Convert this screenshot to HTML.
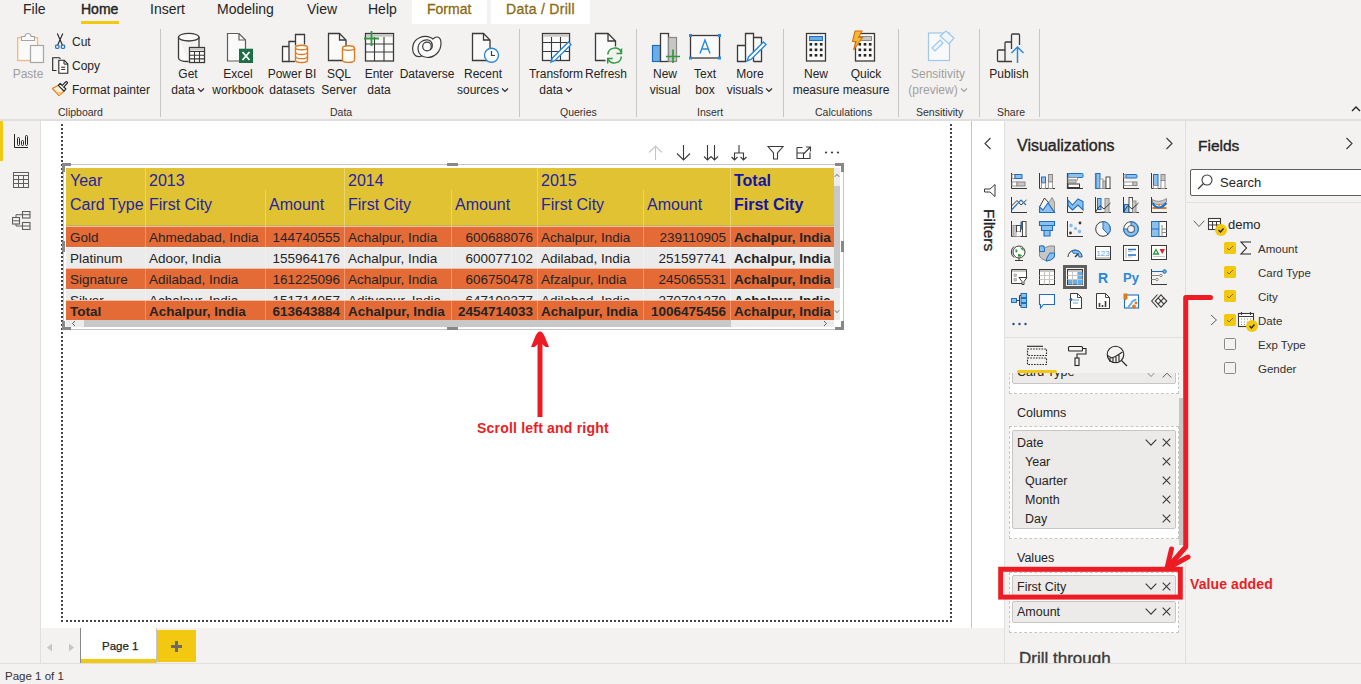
<!DOCTYPE html>
<html><head><meta charset="utf-8">
<style>
*{box-sizing:border-box;margin:0;padding:0}
html,body{width:1361px;height:684px;overflow:hidden;background:#f3f2f1;font-family:"Liberation Sans",sans-serif;color:#252423;position:relative}
.a{position:absolute}
.t{position:absolute;white-space:nowrap;line-height:1}
/* tabs */
.tab{position:absolute;top:1px;font-size:14px;color:#252423;line-height:16px}
/* ribbon */
.rb{position:absolute;text-align:center;font-size:12px;line-height:16px;color:#252423;white-space:nowrap}
.rb svg{display:block;margin:0 auto}
.rb svg.chev{display:inline-block;margin:0 0 1px 2px;vertical-align:middle}
.glbl{position:absolute;top:106px;font-size:10.5px;color:#323130;white-space:nowrap;line-height:12px}
.sep{position:absolute;top:29px;width:1px;height:88px;background:#c8c6c4}
/* table */
.tbl{position:absolute;left:66px;top:168px;width:769px;height:152px;overflow:hidden;background:#fff}
.hd{position:absolute;left:0;top:0;width:769px;height:58px;background:#e0c232}
.row{position:absolute;left:0;width:769px;height:21px;box-shadow:inset 0 1px 0 rgba(255,255,255,.55)}
.or{background:#e46b36}
.gr{background:#ebebeb}
.c{position:absolute;top:1px;white-space:nowrap;font-size:13.5px;line-height:21px;color:#252423}
.h{position:absolute;white-space:nowrap;font-size:16px;line-height:20px;color:#2424a4}
.vl{position:absolute;width:1px;background:rgba(255,255,255,.3)}
</style></head>
<body>

<!-- ===== Tabs row ===== -->
<div class="a" style="left:412px;top:0;width:75px;height:24px;background:#fff"></div>
<div class="a" style="left:491px;top:0;width:99px;height:24px;background:#fff"></div>
<div class="tab" style="left:23px">File</div>
<div class="tab" style="left:81px;font-size:14px;-webkit-text-stroke:0.4px #252423">Home</div>
<div class="a" style="left:81px;top:21px;width:38px;height:3px;background:#f2c811"></div>
<div class="tab" style="left:150px">Insert</div>
<div class="tab" style="left:217px">Modeling</div>
<div class="tab" style="left:307px">View</div>
<div class="tab" style="left:368px">Help</div>
<div class="tab" style="left:427px;color:#8a6a10;font-size:14px;-webkit-text-stroke:0.3px #8a6a10">Format</div>
<div class="tab" style="left:506px;color:#8a6a10;font-size:14px;letter-spacing:0.3px;-webkit-text-stroke:0.3px #8a6a10">Data / Drill</div>


<!-- ===== Ribbon ===== -->
<!-- Paste -->
<svg class="a" style="left:14px;top:32px" width="32" height="32" viewBox="0 0 32 32">
 <rect x="3.6" y="5.6" width="20" height="23" fill="#fbf3d6" stroke="#f2b58e" stroke-width="1.2"/>
 <rect x="5.5" y="7.5" width="16.5" height="19.5" fill="#fafafa"/>
 <path d="M7.5 8.5V4.5h3.5a3 3 0 0 1 6 0h3.5v4z" fill="#fafafa" stroke="#a8a6a4" stroke-width="1.1"/>
 <rect x="16.5" y="13.5" width="13" height="17" fill="#fafafa" stroke="#a8a6a4" stroke-width="1.2"/>
</svg>
<div class="rb" style="left:9px;top:66px;width:38px;color:#a19f9d">Paste</div>
<!-- Cut -->
<svg class="a" style="left:52px;top:33px" width="16" height="16" viewBox="0 0 16 16">
 <path d="M5.3 0.5L10.5 12.2M10.8 0.5L5.6 12.2" stroke="#252423" stroke-width="1.1" fill="none"/>
 <rect x="3.6" y="12.2" width="3.3" height="3.1" rx="0.8" fill="none" stroke="#2b79c2" stroke-width="1.3"/>
 <rect x="9.3" y="12.2" width="3.3" height="3.1" rx="0.8" fill="none" stroke="#2b79c2" stroke-width="1.3"/>
</svg>
<div class="rb" style="left:72px;top:34px;text-align:left">Cut</div>
<!-- Copy -->
<svg class="a" style="left:52px;top:57px" width="17" height="17" viewBox="0 0 17 17">
 <path d="M4.5 13.5H0.7V0.7H7.3L8.5 1.9" fill="none" stroke="#252423" stroke-width="1.1"/>
 <path d="M6.8 3.3h5.4l3.6 3.6v9.4H6.8z" fill="#fff" stroke="#252423" stroke-width="1.1"/>
 <path d="M12 3.3v3.8h3.8" fill="none" stroke="#252423" stroke-width="1"/>
 <path d="M9.2 10.2h4M9.2 12.4h4" stroke="#252423" stroke-width="1"/>
</svg>
<div class="rb" style="left:72px;top:58px;text-align:left">Copy</div>
<!-- Format painter -->
<svg class="a" style="left:52px;top:81px" width="17" height="16" viewBox="0 0 17 16">
 <path d="M0.4 7.5L6.5 4.2 12.3 10 7 14.6z" fill="#fff2dc" stroke="#e07a1f" stroke-width="1.2" stroke-linejoin="round"/>
 <path d="M4 10.5L10.5 11.5 7 14.3z" fill="#fbc36b"/>
 <path d="M6.3 4.3L8.2 2.3 13.9 8 11.9 10z" fill="#fff" stroke="#252423" stroke-width="1.1" stroke-linejoin="round"/>
 <path d="M9.8 4.8L13.6 1a1 1 0 0 1 1.5 1.5L11.4 6.3" fill="#fff" stroke="#252423" stroke-width="1.1"/>
</svg>
<div class="rb" style="left:72px;top:82px;text-align:left">Format painter</div>
<div class="glbl" style="left:58px">Clipboard</div>
<div class="sep" style="left:160px"></div>

<!-- Get data -->
<svg class="a" style="left:176px;top:32px" width="32" height="32" viewBox="0 0 32 32">
 <path d="M2.5 5v21c0 2.3 4.7 3.5 10 3.5M23 5v10" fill="#fafafa" stroke="#3b3a39" stroke-width="1.3"/>
 <ellipse cx="12.75" cy="5.2" rx="10.25" ry="3.8" fill="#fafafa" stroke="#3b3a39" stroke-width="1.3"/>
 <rect x="13.5" y="15.5" width="15" height="15" fill="#fff" stroke="#3b3a39" stroke-width="1.3"/>
 <rect x="14" y="16" width="14" height="2.5" fill="#c8c6c4"/>
 <path d="M13.5 19.5h15M13.5 23.2h15M13.5 26.9h15M18.5 19v11.5M23.5 19v11.5" stroke="#3b3a39" stroke-width="1.1"/>
</svg>
<div class="rb" style="left:166px;top:66px;width:44px">Get<br>data<svg class="chev" width="8" height="6" viewBox="0 0 8 6"><path d="M1 1.5L4 4.5 7 1.5" fill="none" stroke="currentColor" stroke-width="1.1"/></svg></div>
<!-- Excel -->
<svg class="a" style="left:224px;top:32px" width="32" height="32" viewBox="0 0 32 32">
 <path d="M3.5 1.5h11.5l6.5 6.5v21H3.5z" fill="#fafafa" stroke="#605e5c" stroke-width="1.2"/>
 <path d="M15 1.5v6.5h6.5" fill="none" stroke="#605e5c" stroke-width="1.2"/>
 <rect x="15" y="16.7" width="14" height="14.3" fill="#1d7044"/>
 <path d="M18.5 20l7 8M25.5 20l-7 8" stroke="#fff" stroke-width="1.8"/>
</svg>
<div class="rb" style="left:207px;top:66px;width:62px">Excel<br>workbook</div>
<!-- Power BI datasets -->
<svg class="a" style="left:280px;top:32px" width="32" height="32" viewBox="0 0 32 32">
 <path d="M2.5 29.5V14.5h6.5v15zM9 14.5V9.5h6.5v4M15.5 9.5V2.5h9v10" fill="#fafafa" stroke="#3b3a39" stroke-width="1.3"/>
 <path d="M9 29.5h6" stroke="#3b3a39" stroke-width="1.3"/>
 <path d="M15.5 15.5v12.5c0 1.8 2.8 2.5 6 2.5s6-0.7 6-2.5V15.5" fill="#fff" stroke="#e07a1f" stroke-width="1.4"/>
 <ellipse cx="21.5" cy="15.5" rx="6" ry="2.3" fill="#fff" stroke="#e07a1f" stroke-width="1.4"/>
 <path d="M15.5 20c0 1.8 2.8 2.5 6 2.5s6-0.7 6-2.5M15.5 24.2c0 1.8 2.8 2.5 6 2.5s6-0.7 6-2.5" fill="none" stroke="#e07a1f" stroke-width="1.3"/>
</svg>
<div class="rb" style="left:262px;top:66px;width:60px">Power BI<br>datasets</div>
<!-- SQL Server -->
<svg class="a" style="left:326px;top:32px" width="32" height="32" viewBox="0 0 32 32">
 <path d="M2.5 1.5h11l6.5 6.5v20.5H2.5z" fill="#fafafa" stroke="#3b3a39" stroke-width="1.3"/>
 <path d="M13.5 1.5v6.5h6.5" fill="none" stroke="#3b3a39" stroke-width="1.3"/>
 <path d="M16.5 16v12c0 1.7 2.7 2.4 6 2.4s6-0.7 6-2.4V16" fill="#fff" stroke="#e07a1f" stroke-width="1.4"/>
 <ellipse cx="22.5" cy="16" rx="6" ry="2.3" fill="#fff" stroke="#e07a1f" stroke-width="1.4"/>
</svg>
<div class="rb" style="left:318px;top:66px;width:42px">SQL<br>Server</div>
<!-- Enter data -->
<svg class="a" style="left:363px;top:30px" width="32" height="32" viewBox="0 0 32 32">
 <rect x="2.5" y="3.5" width="28" height="27.5" fill="#fafafa" stroke="#3b3a39" stroke-width="1.3"/>
 <rect x="3" y="4" width="27" height="2.7" fill="#c8c6c4"/>
 <path d="M2.5 14h28M2.5 22h28M11.5 7v24M21 7v24" stroke="#3b3a39" stroke-width="1.1"/>
 <path d="M1 8.5h15M8.5 1v15" stroke="#2d9a3c" stroke-width="1.8"/>
</svg>
<div class="rb" style="left:359px;top:66px;width:40px">Enter<br>data</div>
<!-- Dataverse -->
<svg class="a" style="left:411px;top:34px" width="32" height="26" viewBox="0 0 32 26">
 <path d="M11 22C4 24.5 0.5 18.5 2 11.5 3.5 4.5 12 0.5 19.5 3.5 25 6 25.5 12.5 22 16" fill="#fafafa" stroke="#3b3a39" stroke-width="1.2"/>
 <path d="M22 5C25.5 1.5 30 2.5 30 9.5 30 17.5 23.5 23.5 16.5 23.5 10.5 23.5 7 19.5 7 14.5 7 8.5 12.5 5 17.5 6 22 7.5 22.5 13.5 19 16" fill="#fafafa" stroke="#3b3a39" stroke-width="1.2"/>
 <circle cx="16" cy="12.5" r="4.3" fill="#fafafa" stroke="#3b3a39" stroke-width="1.2"/>
</svg>
<div class="rb" style="left:398px;top:66px;width:58px">Dataverse</div>
<!-- Recent sources -->
<svg class="a" style="left:470px;top:32px" width="32" height="32" viewBox="0 0 32 32">
 <path d="M2.5 1.5h11l6.5 6.5v20.5H2.5z" fill="#fafafa" stroke="#3b3a39" stroke-width="1.3"/>
 <path d="M13.5 1.5v6.5h6.5" fill="none" stroke="#3b3a39" stroke-width="1.3"/>
 <circle cx="21.5" cy="23.2" r="7" fill="#fff" stroke="#2b88d8" stroke-width="1.4"/>
 <path d="M21.5 19v4.5h3.5" fill="none" stroke="#3b3a39" stroke-width="1.2"/>
</svg>
<div class="rb" style="left:455px;top:66px;width:56px">Recent<br>sources<svg class="chev" width="8" height="6" viewBox="0 0 8 6"><path d="M1 1.5L4 4.5 7 1.5" fill="none" stroke="currentColor" stroke-width="1.1"/></svg></div>
<div class="glbl" style="left:330px">Data</div>
<div class="sep" style="left:519px"></div>

<!-- Transform data -->
<svg class="a" style="left:540px;top:32px" width="32" height="32" viewBox="0 0 32 32">
 <rect x="2.5" y="1.5" width="27" height="27" fill="#fafafa" stroke="#3b3a39" stroke-width="1.3"/>
 <rect x="3" y="2" width="26" height="2.7" fill="#c8c6c4"/>
 <path d="M2.5 10.5h27M2.5 19.5h27M11.5 5v24M20.5 5v24" stroke="#3b3a39" stroke-width="1.1"/>
 <path d="M28.5 10l2.5 2.5-16 16-4 1.5 1.5-4z" fill="#fff" stroke="#2b88d8" stroke-width="1.4"/>
</svg>
<div class="rb" style="left:527px;top:66px;width:58px">Transform<br>data<svg class="chev" width="8" height="6" viewBox="0 0 8 6"><path d="M1 1.5L4 4.5 7 1.5" fill="none" stroke="currentColor" stroke-width="1.1"/></svg></div>
<!-- Refresh -->
<svg class="a" style="left:592px;top:32px" width="32" height="32" viewBox="0 0 32 32">
 <path d="M13.5 28.5H3.5V1.5H16L23.5 9V14.5" fill="#fafafa" stroke="#3b3a39" stroke-width="1.3"/>
 <path d="M16 1.5V9H23.5" fill="none" stroke="#3b3a39" stroke-width="1.3"/>
 <path d="M15.8 22.5A7 7 0 0 1 29.3 20.5M29.4 24.5A7 7 0 0 1 15.9 26.5" fill="none" stroke="#2d9a3c" stroke-width="1.5"/>
 <path d="M29.5 16.5V21.5H24.5M15.7 31.5V26.5H20.7" fill="none" stroke="#2d9a3c" stroke-width="1.5"/>
</svg>
<div class="rb" style="left:581px;top:66px;width:50px">Refresh</div>
<div class="glbl" style="left:560px">Queries</div>
<div class="sep" style="left:636px"></div>

<!-- New visual -->
<svg class="a" style="left:650px;top:32px" width="32" height="32" viewBox="0 0 32 32">
 <rect x="2.5" y="13.5" width="8" height="16" fill="#6aaee8" stroke="#1f6fc0" stroke-width="1.2"/>
 <rect x="10.5" y="1.5" width="8" height="28" fill="#fafafa" stroke="#3b3a39" stroke-width="1.3"/>
 <rect x="18.5" y="5.5" width="8" height="24" fill="#c8c6c4" stroke="#8a8886" stroke-width="1.2"/>
 <path d="M16 24.5h14M23 17.5v13.5" stroke="#2d9a3c" stroke-width="1.7"/>
</svg>
<div class="rb" style="left:644px;top:66px;width:42px">New<br>visual</div>
<!-- Text box -->
<svg class="a" style="left:689px;top:34px" width="32" height="26" viewBox="0 0 32 26">
 <rect x="1.5" y="1.5" width="29" height="22.5" fill="#fafafa" stroke="#3b3a39" stroke-width="1.3"/>
 <path d="M11 19.5L16 6l5 13.5M12.5 15h7" fill="none" stroke="#2b88d8" stroke-width="1.4"/>
 <rect x="0" y="0" width="3" height="3" fill="#2b88d8"/><rect x="29" y="0" width="3" height="3" fill="#2b88d8"/>
 <rect x="0" y="22.5" width="3" height="3" fill="#2b88d8"/><rect x="29" y="22.5" width="3" height="3" fill="#2b88d8"/>
</svg>
<div class="rb" style="left:687px;top:66px;width:36px">Text<br>box</div>
<!-- More visuals -->
<svg class="a" style="left:736px;top:32px" width="32" height="32" viewBox="0 0 32 32">
 <path d="M1.5 29.5V13.5h8v16zM9.5 29.5V1.5h8v28M17.5 5.5h8v24h-8" fill="#fafafa" stroke="#3b3a39" stroke-width="1.3"/>
 <path d="M27.5 10l2.5 2.5-15 15-4 1.5 1.5-4z" fill="#fff" stroke="#2b88d8" stroke-width="1.4"/>
</svg>
<div class="rb" style="left:723px;top:66px;width:54px">More<br>visuals<svg class="chev" width="8" height="6" viewBox="0 0 8 6"><path d="M1 1.5L4 4.5 7 1.5" fill="none" stroke="currentColor" stroke-width="1.1"/></svg></div>
<div class="glbl" style="left:697px">Insert</div>
<div class="sep" style="left:783px"></div>

<!-- New measure -->
<svg class="a" style="left:801px;top:32px" width="32" height="32" viewBox="0 0 32 32">
 <rect x="5.5" y="1.5" width="19" height="27.5" fill="#fafafa" stroke="#3b3a39" stroke-width="1.3"/>
 <rect x="8.5" y="4.5" width="13" height="4" fill="#6aaee8" stroke="#1f6fc0" stroke-width="1"/>
 <g fill="#252423"><rect x="8.5" y="11" width="2.6" height="2.6"/><rect x="13.7" y="11" width="2.6" height="2.6"/><rect x="18.9" y="11" width="2.6" height="2.6"/>
 <rect x="8.5" y="16.5" width="2.6" height="2.6"/><rect x="13.7" y="16.5" width="2.6" height="2.6"/><rect x="18.9" y="16.5" width="2.6" height="2.6"/>
 <rect x="8.5" y="22" width="2.6" height="2.6"/><rect x="13.7" y="22" width="2.6" height="2.6"/><rect x="18.9" y="22" width="2.6" height="2.6"/></g>
</svg>
<div class="rb" style="left:792px;top:66px;width:48px">New<br>measure</div>
<!-- Quick measure -->
<svg class="a" style="left:849px;top:30px" width="32" height="34" viewBox="0 0 32 34">
 <rect x="6.5" y="3.5" width="19" height="27.5" fill="#fafafa" stroke="#3b3a39" stroke-width="1.3"/>
 <rect x="9.5" y="6.5" width="13" height="4" fill="#c8c6c4" stroke="#8a8886" stroke-width="1"/>
 <g fill="#252423"><rect x="9.5" y="13" width="2.6" height="2.6"/><rect x="14.7" y="13" width="2.6" height="2.6"/><rect x="19.9" y="13" width="2.6" height="2.6"/>
 <rect x="9.5" y="18.5" width="2.6" height="2.6"/><rect x="14.7" y="18.5" width="2.6" height="2.6"/><rect x="19.9" y="18.5" width="2.6" height="2.6"/>
 <rect x="9.5" y="24" width="2.6" height="2.6"/><rect x="14.7" y="24" width="2.6" height="2.6"/><rect x="19.9" y="24" width="2.6" height="2.6"/></g>
 <path d="M6 1h7l-3.5 6.5h4L4.5 20l2.5-8.5H3.5z" fill="#f7b733" stroke="#d86f0e" stroke-width="1.1"/>
</svg>
<div class="rb" style="left:839px;top:66px;width:54px">Quick<br>measure</div>
<div class="glbl" style="left:815px">Calculations</div>
<div class="sep" style="left:898px"></div>

<!-- Sensitivity -->
<svg class="a" style="left:926px;top:30px" width="32" height="32" viewBox="0 0 32 32">
 <rect x="2.5" y="3" width="21" height="27.5" fill="#f7f9fb" stroke="#9fc8ea" stroke-width="1.2"/>
 <path d="M6 18l8-8 3 3-8 8z" fill="#eef5fb" stroke="#9fc8ea" stroke-width="1.2"/>
 <path d="M14 6l6-5 8 7-5 6z" fill="#eef5fb" stroke="#9fc8ea" stroke-width="1.2"/>
</svg>
<div class="rb" style="left:904px;top:66px;width:68px;color:#a19f9d">Sensitivity<br>(preview)<svg class="chev" width="8" height="6" viewBox="0 0 8 6"><path d="M1 1.5L4 4.5 7 1.5" fill="none" stroke="currentColor" stroke-width="1.1"/></svg></div>
<div class="glbl" style="left:916px">Sensitivity</div>
<div class="sep" style="left:979px"></div>

<!-- Publish -->
<svg class="a" style="left:996px;top:32px" width="32" height="32" viewBox="0 0 32 32">
 <path d="M2.5 29.5c-0.6 0-1-0.4-1-1V19c0-0.6 0.4-1 1-1h6.5M9 29.5V11c0-0.6 0.4-1 1-1h5.5M15.5 17V3c0-0.6 0.4-1 1-1h6c0.6 0 1 0.4 1 1v10M2.5 29.5H16" fill="none" stroke="#3b3a39" stroke-width="1.3"/>
 <path d="M21.5 31V15M15.5 21l6-6 6 6" fill="none" stroke="#2b88d8" stroke-width="1.5"/>
</svg>
<div class="rb" style="left:987px;top:66px;width:44px">Publish</div>
<div class="glbl" style="left:997px">Share</div>
<div class="sep" style="left:1039px"></div>
<svg class="a" style="left:1351px;top:105px" width="10" height="8" viewBox="0 0 10 8"><path d="M1 6l4-4 4 4" fill="none" stroke="#252423" stroke-width="1.4"/></svg>

<!-- ribbon border -->
<div class="a" style="left:0;top:119px;width:1361px;height:2px;background:#e1dfdd"></div>

<!-- ===== Left nav ===== -->
<div class="a" style="left:40px;top:121px;width:1px;height:542px;background:#e1dfdd"></div>
<div class="a" style="left:0;top:121px;width:3px;height:40px;background:#f2c811"></div>
<svg class="a" style="left:13px;top:133px" width="16" height="16" viewBox="0 0 16 16"><path d="M1.5 1v13.5H15" fill="none" stroke="#252423" stroke-width="1"/><rect x="4.5" y="4.5" width="2" height="8" rx="1" fill="none" stroke="#252423" stroke-width="1"/><rect x="8.5" y="7.5" width="2" height="5" rx="1" fill="none" stroke="#252423" stroke-width="1"/><rect x="12.5" y="2.5" width="2" height="10" rx="1" fill="none" stroke="#252423" stroke-width="1"/></svg>
<svg class="a" style="left:13px;top:172px" width="17" height="17" viewBox="0 0 17 17"><rect x="0.5" y="0.5" width="15" height="15" fill="none" stroke="#605e5c" stroke-width="1"/><path d="M0.5 3.5h15M0.5 7.5h15M0.5 11.5h15M5.5 3.5V16M10.5 3.5V16" stroke="#605e5c" stroke-width="1"/></svg>
<svg class="a" style="left:12px;top:211px" width="19" height="19" viewBox="0 0 19 19"><rect x="0.5" y="6.5" width="7" height="6.5" fill="none" stroke="#605e5c" stroke-width="1.1"/><rect x="10.5" y="0.5" width="7.5" height="6.5" fill="none" stroke="#605e5c" stroke-width="1.1"/><rect x="10.5" y="11.5" width="7.5" height="7" fill="none" stroke="#605e5c" stroke-width="1.1"/><path d="M0.5 9.8h7M10.5 3.7h7.5M10.5 15h7.5M4 6.5V3.7h6.5M4 13v2h6.5" fill="none" stroke="#605e5c" stroke-width="1"/></svg>

<!-- ===== Canvas ===== -->
<div class="a" style="left:41px;top:121px;width:930px;height:507px;background:#fff"></div>
<div class="a" style="left:971px;top:121px;width:1px;height:507px;background:#c8c6c4"></div>
<div class="a" style="left:61px;top:124px;width:891px;height:498px;border:2px dotted #454545;border-top:none"></div>


<!-- visual header icons -->
<svg class="a" style="left:646px;top:144px" width="196" height="18" viewBox="0 0 196 18">
 <path d="M9.5 16V2M3 8.5l6.5-6.5 6.5 6.5" fill="none" stroke="#c8c6c4" stroke-width="1.1"/>
 <path d="M37.5 1v15M31 9.5l6.5 6.5 6.5-6.5" fill="none" stroke="#3b3a39" stroke-width="1.1"/>
 <path d="M61.5 1v15M58 12.5l3.5 3.5 3.5-3.5M68.5 1v15M65 12.5l3.5 3.5 3.5-3.5" fill="none" stroke="#3b3a39" stroke-width="1.1"/>
 <path d="M93 1v8M88.5 16V9h9v7M85.5 13l3 3 3-3M94.5 13l3 3 3-3" fill="none" stroke="#3b3a39" stroke-width="1.1"/>
 <path d="M122 2.5h15l-5.5 6.5v6h-4v-6z" fill="none" stroke="#3b3a39" stroke-width="1.1"/>
 <path d="M151 3.5h5.5M151 3.5v11h13v-6M151 9h6.5v5.5M158 9.5l6-6M160 3h4.5v4.5" fill="none" stroke="#3b3a39" stroke-width="1.1"/>
 <circle cx="180" cy="8.5" r="1.1" fill="#3b3a39"/><circle cx="186" cy="8.5" r="1.1" fill="#3b3a39"/><circle cx="192" cy="8.5" r="1.1" fill="#3b3a39"/>
</svg>
<!-- visual frame -->
<div class="a" style="left:63px;top:164px;width:781px;height:166px;border:1px solid #c8c6c4"></div>
<div class="tbl">
 <div class="hd"></div>
 <div class="h" style="left:4px;top:3px">Year</div>
 <div class="h" style="left:4px;top:27px">Card Type</div>
 <div class="h" style="left:83px;top:3px">2013</div>
 <div class="h" style="left:83px;top:27px">First City</div>
 <div class="h" style="left:203px;top:27px">Amount</div>
 <div class="h" style="left:282px;top:3px">2014</div>
 <div class="h" style="left:282px;top:27px">First City</div>
 <div class="h" style="left:389px;top:27px">Amount</div>
 <div class="h" style="left:475px;top:3px">2015</div>
 <div class="h" style="left:475px;top:27px">First City</div>
 <div class="h" style="left:581px;top:27px">Amount</div>
 <div class="h" style="left:668px;top:3px;font-weight:bold;color:#1414aa">Total</div>
 <div class="h" style="left:668px;top:27px;font-weight:bold;color:#1414aa">First City</div>
 <div class="a" style="left:0;top:57px;width:769px;height:1px;background:#b9b65a"></div>
 <div class="row or" style="top:58px"><div class="c" style="left:4px">Gold</div><div class="c" style="left:83px">Ahmedabad, India</div><div class="c" style="left:199px;width:75px;text-align:right">144740555</div><div class="c" style="left:282px">Achalpur, India</div><div class="c" style="left:385px;width:82px;text-align:right">600688076</div><div class="c" style="left:475px">Achalpur, India</div><div class="c" style="left:577px;width:83px;text-align:right">239110905</div><div class="c" style="left:668px;font-weight:bold">Achalpur, India</div></div>
<div class="row gr" style="top:79px"><div class="c" style="left:4px">Platinum</div><div class="c" style="left:83px">Adoor, India</div><div class="c" style="left:199px;width:75px;text-align:right">155964176</div><div class="c" style="left:282px">Achalpur, India</div><div class="c" style="left:385px;width:82px;text-align:right">600077102</div><div class="c" style="left:475px">Adilabad, India</div><div class="c" style="left:577px;width:83px;text-align:right">251597741</div><div class="c" style="left:668px;font-weight:bold">Achalpur, India</div></div>
<div class="row or" style="top:100px"><div class="c" style="left:4px">Signature</div><div class="c" style="left:83px">Adilabad, India</div><div class="c" style="left:199px;width:75px;text-align:right">161225096</div><div class="c" style="left:282px">Achalpur, India</div><div class="c" style="left:385px;width:82px;text-align:right">606750478</div><div class="c" style="left:475px">Afzalpur, India</div><div class="c" style="left:577px;width:83px;text-align:right">245065531</div><div class="c" style="left:668px;font-weight:bold">Achalpur, India</div></div>
<div class="row gr" style="top:121px"><div class="c" style="left:4px">Silver</div><div class="c" style="left:83px">Achalpur, India</div><div class="c" style="left:199px;width:75px;text-align:right">151714057</div><div class="c" style="left:282px">Adityapur, India</div><div class="c" style="left:385px;width:82px;text-align:right">647198377</div><div class="c" style="left:475px">Adilabad, India</div><div class="c" style="left:577px;width:83px;text-align:right">270701279</div><div class="c" style="left:668px;font-weight:bold">Achalpur, India</div></div>
<div class="row or" style="top:132px"><div class="c" style="left:4px;font-weight:bold">Total</div><div class="c" style="left:83px;font-weight:bold">Achalpur, India</div><div class="c" style="left:199px;width:75px;text-align:right;font-weight:bold">613643884</div><div class="c" style="left:282px;font-weight:bold">Achalpur, India</div><div class="c" style="left:385px;width:82px;text-align:right;font-weight:bold">2454714033</div><div class="c" style="left:475px;font-weight:bold">Achalpur, India</div><div class="c" style="left:577px;width:83px;text-align:right;font-weight:bold">1006475456</div><div class="c" style="left:668px;font-weight:bold">Achalpur, India</div></div>

 <div class="vl" style="left:79px;top:0;height:152px"></div><div class="vl" style="left:278px;top:0;height:152px"></div><div class="vl" style="left:471px;top:0;height:152px"></div><div class="vl" style="left:664px;top:0;height:152px"></div><div class="vl" style="left:199px;top:22px;height:130px"></div><div class="vl" style="left:385px;top:22px;height:130px"></div><div class="vl" style="left:577px;top:22px;height:130px"></div>
</div>
<!-- scrollbars -->
<div class="a" style="left:66px;top:320px;width:768px;height:7px;background:#ececec"></div>
<div class="a" style="left:84px;top:320px;width:647px;height:7px;background:#c8c8c8"></div>
<svg class="a" style="left:71px;top:320px" width="6" height="7" viewBox="0 0 6 7"><path d="M4 1L1.5 3.5 4 6" fill="none" stroke="#605e5c" stroke-width="1"/></svg>
<svg class="a" style="left:822px;top:320px" width="6" height="7" viewBox="0 0 6 7"><path d="M2 1l2.5 2.5L2 6" fill="none" stroke="#605e5c" stroke-width="1"/></svg>
<div class="a" style="left:834px;top:168px;width:6px;height:152px;background:#ececec"></div>
<div class="a" style="left:834px;top:186px;width:6px;height:102px;background:#c8c8c8"></div>
<svg class="a" style="left:834px;top:173px" width="6" height="5" viewBox="0 0 6 5"><path d="M0.8 3.8L3 1.3 5.2 3.8" fill="none" stroke="#605e5c" stroke-width="0.9"/></svg>
<svg class="a" style="left:834px;top:309px" width="6" height="5" viewBox="0 0 6 5"><path d="M0.8 1.2L3 3.7 5.2 1.2" fill="none" stroke="#605e5c" stroke-width="0.9"/></svg>
<!-- handles -->
<div class="a" style="left:62px;top:163px;width:9px;height:3px;background:#8a8886"></div>
<div class="a" style="left:62px;top:163px;width:3px;height:9px;background:#8a8886"></div>
<div class="a" style="left:835px;top:163px;width:9px;height:3px;background:#8a8886"></div>
<div class="a" style="left:841px;top:163px;width:3px;height:9px;background:#8a8886"></div>
<div class="a" style="left:62px;top:321px;width:3px;height:9px;background:#8a8886"></div>
<div class="a" style="left:62px;top:327px;width:9px;height:3px;background:#8a8886"></div>
<div class="a" style="left:835px;top:327px;width:9px;height:3px;background:#8a8886"></div>
<div class="a" style="left:841px;top:321px;width:3px;height:9px;background:#8a8886"></div>
<div class="a" style="left:447px;top:163px;width:11px;height:3px;background:#8a8886"></div>
<div class="a" style="left:447px;top:327px;width:11px;height:3px;background:#8a8886"></div>
<div class="a" style="left:62px;top:241px;width:3px;height:11px;background:#8a8886"></div>
<div class="a" style="left:841px;top:241px;width:3px;height:11px;background:#8a8886"></div>

<!-- annotation arrow -->
<svg class="a" style="left:525px;top:328px" width="30" height="92" viewBox="0 0 30 92">
 <path d="M12.5 14h5v75h-5z" fill="#ed1c24"/>
 <path d="M15 3.5C17 3.5 18 5 19.5 8L24 19h-3.5l-4-3.5h-3l-4 3.5H6L10.5 8C12 5 13 3.5 15 3.5z" fill="#ed1c24"/>
</svg>
<div class="t" style="left:477px;top:421px;font-size:14px;font-weight:bold;color:#ed1c24;letter-spacing:0.2px">Scroll left and right</div>

<!-- Filters pane -->
<div class="a" style="left:972px;top:121px;width:32px;height:507px;background:#fff"></div>
<div class="a" style="left:1004px;top:121px;width:1px;height:542px;background:#e1dfdd"></div>
<div class="a" style="left:1185px;top:121px;width:1px;height:542px;background:#e1dfdd"></div>


<!-- ===== Filters pane content ===== -->
<svg class="a" style="left:984px;top:137px" width="8" height="13" viewBox="0 0 8 13"><path d="M6.5 1L1 6.5 6.5 12" fill="none" stroke="#3b3a39" stroke-width="1.1"/></svg>
<svg class="a" style="left:984px;top:184px" width="12" height="13" viewBox="0 0 12 13"><path d="M11 0.5v12L6 8H0.5V5H6z" fill="none" stroke="#3b3a39" stroke-width="1"/></svg>
<div class="t" style="left:981px;top:209px;font-size:15.5px;color:#252423;-webkit-text-stroke:0.35px #252423;transform-origin:0 0;transform:translate(16px,0) rotate(90deg)">Filters</div>

<!-- ===== Visualizations pane ===== -->
<div class="t" style="left:1017px;top:138px;font-size:16px;color:#252423;-webkit-text-stroke:0.35px #252423">Visualizations</div>
<svg class="a" style="left:1165px;top:137px" width="9" height="13" viewBox="0 0 9 13"><path d="M1.5 1L7 6.5 1.5 12" fill="none" stroke="#3b3a39" stroke-width="1.1"/></svg>
<svg class="a" style="left:1005px;top:165px" width="180" height="170" viewBox="0 0 180 170"><g transform="translate(6,8)"><path d="M0.5 0V15.5H16" fill="none" stroke="#3b3a39" stroke-width="1"/><rect x="1" y="1.5" width="3" height="4" fill="#fff" stroke="#8a8886" stroke-width=".8"/><rect x="4" y="1.5" width="7" height="4" fill="#8cc0ee" stroke="#1f6fc0" stroke-width="1"/><rect x="1" y="9" width="5" height="4" fill="#fff" stroke="#8a8886" stroke-width=".8"/><rect x="6" y="9" width="8" height="4" fill="#c8c6c4" stroke="#8a8886" stroke-width="1"/></g>
<g transform="translate(34,8)"><path d="M0.5 0V15.5H16" fill="none" stroke="#3b3a39" stroke-width="1"/><rect x="2.5" y="4" width="4" height="6" fill="#8cc0ee" stroke="#1f6fc0"/><rect x="2.5" y="10" width="4" height="5.5" fill="#fff" stroke="#8a8886" stroke-width=".8"/><rect x="9.5" y="1.5" width="4" height="7.5" fill="#c8c6c4" stroke="#8a8886"/><rect x="9.5" y="9" width="4" height="6.5" fill="#fff" stroke="#8a8886" stroke-width=".8"/></g>
<g transform="translate(62,8)"><path d="M0.5 0V15.5H16" fill="none" stroke="#3b3a39" stroke-width="1.2"/><rect x="1" y="0.5" width="15" height="4" rx="1" fill="#8cc0ee" stroke="#1f6fc0"/><rect x="1" y="4.5" width="9.5" height="2.5" fill="#fff" stroke="#8a8886" stroke-width=".8"/><rect x="1" y="7" width="8" height="2.8" fill="#c8c6c4" stroke="#8a8886" stroke-width=".8"/><rect x="1" y="11" width="11.5" height="3.5" fill="#fff" stroke="#3b3a39" stroke-width="1"/></g>
<g transform="translate(90,8)"><path d="M0.5 0V15.5H16" fill="none" stroke="#8a8886" stroke-width="1.2"/><rect x="1" y="0.5" width="4" height="15" fill="#8cc0ee" stroke="#1f6fc0"/><rect x="5" y="6" width="3" height="9.5" fill="#fff" stroke="#8a8886" stroke-width=".8"/><rect x="8" y="8" width="3" height="7.5" fill="#c8c6c4" stroke="#8a8886" stroke-width=".8"/><rect x="11" y="4" width="4" height="11.5" fill="#fff" stroke="#3b3a39" stroke-width=".9"/></g>
<g transform="translate(118,8)"><path d="M0.5 0V15.5H16" fill="none" stroke="#3b3a39" stroke-width="1"/><rect x="1" y="1.5" width="2" height="3.5" fill="#fff" stroke="#8a8886" stroke-width=".8"/><rect x="3" y="1.5" width="11" height="3.5" rx=".8" fill="#8cc0ee" stroke="#1f6fc0"/><rect x="1" y="9" width="9" height="3.5" fill="#fff" stroke="#8a8886" stroke-width=".8"/><rect x="10" y="9" width="4" height="3.5" fill="#c8c6c4" stroke="#8a8886"/></g>
<g transform="translate(146,8)"><path d="M0.5 0V15.5H16" fill="none" stroke="#3b3a39" stroke-width="1"/><rect x="2.5" y="1.5" width="4.5" height="11" fill="#8cc0ee" stroke="#1f6fc0"/><rect x="2.5" y="12.5" width="4.5" height="3" fill="#fff" stroke="#8a8886" stroke-width=".8"/><rect x="10" y="1.5" width="4" height="6" fill="#c8c6c4" stroke="#8a8886"/><rect x="10" y="7.5" width="4" height="8" fill="#fff" stroke="#8a8886" stroke-width=".9"/></g>
<g transform="translate(6,32)"><path d="M0.5 0V15.5H16" fill="none" stroke="#3b3a39" stroke-width="1"/><path d="M0.5 9L6 3.5 10 8 15.5 3" fill="none" stroke="#3b3a39" stroke-width="1"/><path d="M0.5 13L10 3 15 8" fill="none" stroke="#1f6fc0" stroke-width="1.1"/></g>
<g transform="translate(34,32)"><path d="M0.5 10L5.5 1 10 6" fill="#f7f7f7" stroke="#3b3a39" stroke-width="1"/><path d="M9.5 6.5L13 0.5 15.5 5V15.5z" fill="#c8c6c4" stroke="#8a8886" stroke-width=".9"/><path d="M0.5 10L4 13 9 6 15.5 15.5H0.5z" fill="#8cc0ee" stroke="#1f6fc0" stroke-width="1.1"/></g>
<g transform="translate(62,32)"><path d="M0.5 0V15.5H16" fill="none" stroke="#3b3a39" stroke-width="1"/><path d="M1 3L5.5 8 11 2 16 4.5V13L11 8 5.5 13 1 8.5z" fill="#8cc0ee" stroke="#1f6fc0" stroke-width="1.1"/></g>
<g transform="translate(90,32)"><path d="M0.5 0V15.5H16" fill="none" stroke="#3b3a39" stroke-width="1"/><rect x="2.5" y="1.5" width="3.5" height="11" fill="#8cc0ee" stroke="#1f6fc0"/><rect x="10" y="1.5" width="4" height="14" fill="#c8c6c4" stroke="#8a8886" stroke-width=".9"/><path d="M0.5 15L5 8.5 9 12 15.5 6" fill="none" stroke="#3b3a39" stroke-width="1"/></g>
<g transform="translate(118,32)"><path d="M0.5 0V15.5H16" fill="none" stroke="#3b3a39" stroke-width="1"/><rect x="1.5" y="7.5" width="4.5" height="8" fill="#8cc0ee" stroke="#1f6fc0"/><rect x="6" y="0.5" width="3.5" height="15" fill="#fff" stroke="#3b3a39" stroke-width=".9"/><rect x="9.5" y="4" width="3.5" height="11.5" fill="#c8c6c4" stroke="#8a8886" stroke-width=".9"/><path d="M0.5 15L5 8.5 9 12 15.5 6" fill="none" stroke="#3b3a39" stroke-width="1"/></g>
<g transform="translate(146,32)"><path d="M0.5 0V15.5H16" fill="none" stroke="#3b3a39" stroke-width="1"/><path d="M1.5 2.5C5 5 10 5 15.5 1.5V5C10 9 5 8 1.5 6z" fill="#c8c6c4" stroke="#8a8886" stroke-width=".9"/><rect x="1.5" y="10" width="14" height="2" fill="#e07a1f"/><path d="M1.5 6C5 12 10 12 15.5 6" fill="none" stroke="#1f6fc0" stroke-width="2.2"/><circle cx="8" cy="8" r="1" fill="#e07a1f"/></g>
<g transform="translate(6,56)"><path d="M0.5 0V15.5H16" fill="none" stroke="#3b3a39" stroke-width="1"/><rect x="2" y="4.5" width="3.5" height="11" fill="#c8c6c4" stroke="#8a8886" stroke-width=".8"/><rect x="5.5" y="4.5" width="4" height="6.5" fill="#fff" stroke="#3b3a39" stroke-width=".9"/><rect x="9.5" y="0.5" width="2" height="8" fill="#1f6fc0"/><rect x="11.5" y="0.5" width="3.5" height="15" fill="#fff" stroke="#3b3a39" stroke-width=".9"/><rect x="5.5" y="11" width="4" height="4.5" fill="#fff"/></g>
<g transform="translate(34,56)"><path d="M0.5 0.5h15v4h-2v5h-2.5v5.5h-6V9.5H2.5v-5h-2z" fill="#8cc0ee" stroke="#1f6fc0" stroke-width="1.1"/><path d="M2.5 4.5h11M5 9.5h6" stroke="#1f6fc0" stroke-width="1"/></g>
<g transform="translate(62,56)"><path d="M0.5 0V15.5H16" fill="none" stroke="#3b3a39" stroke-width="1"/><circle cx="4" cy="4.5" r="1.4" fill="#8cc0ee" stroke="#6aaee8" stroke-width=".6"/><circle cx="13" cy="2" r="1.4" fill="#3b3a39"/><rect x="7.3" y="6.3" width="2.4" height="2.4" fill="#6aaee8"/><circle cx="3.5" cy="12" r="1.4" fill="#3b3a39"/><circle cx="12.5" cy="10.5" r="1.4" fill="#8cc0ee" stroke="#6aaee8" stroke-width=".6"/></g>
<g transform="translate(90,56)"><circle cx="8" cy="8" r="7.3" fill="#fafafa" stroke="#3b3a39" stroke-width="1"/><path d="M8 0.7V8l5.2 5.2A7.3 7.3 0 0 0 8 0.7z" fill="#8cc0ee" stroke="#1f6fc0" stroke-width="1"/></g>
<g transform="translate(118,56)"><circle cx="8" cy="8" r="7.3" fill="#fafafa" stroke="#3b3a39" stroke-width=".9"/><path d="M8 0.7A7.3 7.3 0 1 1 0.7 8H4.5A3.5 3.5 0 1 0 8 4.5z" fill="#8cc0ee" stroke="#1f6fc0" stroke-width="1.1"/><circle cx="8" cy="8" r="3.5" fill="#f3f2f1" stroke="#3b3a39" stroke-width=".7"/></g>
<g transform="translate(146,56)"><rect x="0.5" y="0.5" width="15" height="15" fill="#fff" stroke="#3b3a39" stroke-width="1"/><rect x="0.5" y="0.5" width="7.5" height="15" fill="#8cc0ee" stroke="#1f6fc0" stroke-width="1"/><path d="M0.5 8H8" stroke="#1f6fc0"/><path d="M11 4v11.5M11 8h4.5M11 11.5h4.5" stroke="#8a8886" stroke-width="1"/></g>
<g transform="translate(6,80)"><circle cx="8" cy="7" r="6" fill="#fff" stroke="#3b3a39" stroke-width="1"/><path d="M4.5 4c1 0 2 1 2 2s-1 1.5-2 1.5zM9 2.5c2 0 4 1 4 3-1 0-2-0.5-2.5-1zM7 9c1.5 0 3 0.5 4 1.5-1 1.5-3 1.5-4 1z" fill="#2e9a3c"/><path d="M3 1.5a7 7 0 0 0 0 11M8 13v2M4 15.5h8" fill="none" stroke="#3b3a39" stroke-width="1"/></g>
<g transform="translate(34,80)"><path d="M0.5 1h4l2 1.5 4-1.5h5v10l-1 2-3 2-4 1-5-2.5L0.5 11z" fill="#c8c6c4" stroke="#8a8886" stroke-width="1"/><path d="M0.5 1h4l1 3v2.5H0.5z" fill="#8cc0ee" stroke="#1f6fc0" stroke-width="1"/><path d="M15.5 8v3l-1 2-3 2-4 1 0-2 1.5-3 2-3z" fill="#8cc0ee" stroke="#1f6fc0" stroke-width="1"/></g>
<g transform="translate(62,80)"><path d="M1 12a7 7 0 0 1 14 0" fill="none" stroke="#3b3a39" stroke-width="1"/><path d="M5 6a7 7 0 0 1 10 6h-3a4 4 0 0 0-5.5-3.5z" fill="#8cc0ee" stroke="#1f6fc0" stroke-width="1"/><path d="M8 12l3.5-3.5" stroke="#3b3a39" stroke-width="1.6"/></g>
<g transform="translate(90,80)"><rect x="0.5" y="1.5" width="15" height="13" fill="#fff" stroke="#3b3a39" stroke-width="1"/><rect x="1" y="12" width="14" height="2" fill="#c8c6c4"/><text x="8" y="10.5" font-size="8" font-family="Liberation Sans" fill="#5fa3e0" text-anchor="middle">123</text></g>
<g transform="translate(118,80)"><rect x="0.5" y="0.5" width="15" height="15" fill="#fff" stroke="#3b3a39" stroke-width="1"/><path d="M3 3v10" stroke="#c8c6c4" stroke-width="1.4"/><path d="M5 4.5h8M5 10h8" stroke="#1f6fc0" stroke-width="1.4"/><path d="M5 6.5h4M5 12h4" stroke="#c8c6c4" stroke-width="1"/></g>
<g transform="translate(146,80)"><rect x="0.5" y="0.5" width="15" height="14" fill="#fff" stroke="#3b3a39" stroke-width="1"/><path d="M2.5 9L5 4.5 7.5 9z" fill="#fff" stroke="#2e9a3c" stroke-width="1.3"/><path d="M8.5 4h5.5l-2.8 5z" fill="#ed1c24"/><path d="M2 11.5h12" stroke="#c8c6c4" stroke-width="1"/></g>
<g transform="translate(6,104)"><path d="M11 14.5H0.5V0.5h15v8" fill="#fff" stroke="#3b3a39" stroke-width="1"/><rect x="1" y="1" width="14" height="2" fill="#c8c6c4"/><rect x="3" y="5" width="2.5" height="2.5" fill="#c8c6c4" stroke="#8a8886" stroke-width=".5"/><rect x="3" y="9.5" width="2.5" height="2.5" fill="#c8c6c4" stroke="#8a8886" stroke-width=".5"/><path d="M8 8.5h8l-3 4v3h-2v-3z" fill="#fff" stroke="#3b3a39" stroke-width="1"/></g>
<g transform="translate(34,104)"><rect x="0.5" y="0.5" width="15" height="15" fill="#fff" stroke="#3b3a39" stroke-width="1"/><rect x="1" y="1" width="14" height="2" fill="#c8c6c4"/><path d="M0.5 6.5h15M0.5 10.5h15M5.5 3v12.5M10.5 3v12.5" stroke="#c8c6c4" stroke-width="1.2"/></g>
<g transform="translate(62,104)"><rect x="0.5" y="0.5" width="15" height="15" fill="#fff" stroke="#3b3a39" stroke-width="1"/><rect x="1" y="1" width="14" height="2" fill="#c8c6c4"/><rect x="10.5" y="3" width="5" height="12.5" fill="#6aaee8"/><rect x="1" y="10.5" width="14.5" height="5" fill="#6aaee8"/><path d="M0.5 6.5h15M0.5 10.5h15M5.5 3v12.5M10.5 3v12.5" stroke="#c8c6c4" stroke-width="1"/></g>
<g transform="translate(90,104)"><text x="8" y="14" font-size="14" font-weight="bold" font-family="Liberation Sans" fill="#2b88d8" text-anchor="middle">R</text></g>
<g transform="translate(118,104)"><text x="8" y="13" font-size="13" font-weight="bold" font-family="Liberation Sans" fill="#2b88d8" text-anchor="middle">Py</text></g>
<g transform="translate(146,104)"><path d="M0.5 0V15.5H16" fill="none" stroke="#3b3a39" stroke-width="1"/><path d="M0.5 2.5h12M0.5 6.5h9M0.5 10.5h5" stroke="#1f6fc0" stroke-width="1"/><path d="M0.5 6.5h9M0.5 10.5h5" stroke="#8a8886"/><circle cx="13.5" cy="2.5" r="1.8" fill="#6aaee8" stroke="#1f6fc0"/><circle cx="10" cy="6.5" r="1.2" fill="#fff" stroke="#8a8886"/><circle cx="6" cy="10.5" r="1.2" fill="#fff" stroke="#8a8886"/></g>
<g transform="translate(6,128)"><rect x="0.5" y="5.5" width="5" height="4" fill="#8cc0ee" stroke="#1f6fc0"/><path d="M5.5 7.5h3M8.5 2.5v10" stroke="#3b3a39"/><rect x="10" y="0.5" width="5.5" height="4" fill="#8cc0ee" stroke="#1f6fc0"/><rect x="10" y="5.5" width="5.5" height="4" fill="#8cc0ee" stroke="#1f6fc0"/><rect x="10" y="10.5" width="5.5" height="4" fill="#8cc0ee" stroke="#1f6fc0"/><path d="M8.5 2.5h1.5M8.5 12.5h1.5" stroke="#3b3a39"/></g>
<g transform="translate(34,128)"><path d="M0.5 1.5h15v10h-11l-3 3.5v-3.5h-1z" fill="#fafafa" stroke="#1f6fc0" stroke-width="1.1"/></g>
<g transform="translate(62,128)"><path d="M3.5 0.5h7l4 4v11h-11z" fill="#fff" stroke="#3b3a39" stroke-width="1"/><path d="M10.5 0.5v4h4" fill="none" stroke="#3b3a39" stroke-width=".9"/><circle cx="4" cy="6.5" r="1.6" fill="#1f6fc0"/><path d="M6 7h6M6 10h5" stroke="#5fa3e0" stroke-width="1"/></g>
<g transform="translate(90,128)"><path d="M1.5 0.5h9l4 4v11h-13z" fill="#fff" stroke="#3b3a39" stroke-width="1"/><path d="M10.5 0.5v4h4" fill="none" stroke="#3b3a39" stroke-width=".9"/><path d="M4.5 10v4M7.5 12v2M10.5 8v6" stroke="#3b3a39" stroke-width="1.6"/></g>
<g transform="translate(118,128)"><rect x="1.5" y="2" width="14" height="13" fill="#fff" stroke="#1f6fc0" stroke-width="1.1"/><path d="M5 15c1-3 3-3 4-6 1-2 3-1 4-3" fill="none" stroke="#6aaee8" stroke-width="2"/><path d="M0.5 0.5h4v5l-2 2-2-2z" fill="#e07a1f"/><circle cx="13" cy="10" r="1.4" fill="#e07a1f"/><circle cx="11" cy="13.5" r="2" fill="#e07a1f"/></g>
<g transform="translate(146,128)"><path d="M6.5 1.5L0.7 8 6.5 14.5" fill="none" stroke="#3b3a39" stroke-width="1.1"/><path d="M10 1.8L15.8 8 10 14.2 4.2 8z" fill="none" stroke="#3b3a39" stroke-width="1.1"/><path d="M7.1 4.9L12.9 11.1M12.9 4.9L7.1 11.1" fill="none" stroke="#3b3a39" stroke-width="1.1"/></g>
<rect x="59.5" y="101.5" width="21" height="21" fill="none" stroke="#605e5c" stroke-width="3"/><circle cx="8.5" cy="159" r="1.2" fill="#1f4e8c"/><circle cx="14.5" cy="159" r="1.2" fill="#1f4e8c"/><circle cx="20.5" cy="159" r="1.2" fill="#1f4e8c"/></svg>


<!-- viz pane lower -->
<div class="a" style="left:1005px;top:337px;width:180px;height:1px;background:#e1dfdd"></div>
<svg class="a" style="left:1026px;top:345px" width="104" height="23" viewBox="0 0 104 23">
 <path d="M1 1.3h16" stroke="#252423" stroke-width="1.1"/>
 <rect x="1.5" y="4" width="19" height="6.5" fill="none" stroke="#252423" stroke-width="1.1" stroke-dasharray="1.6 1.2"/>
 <rect x="1.5" y="13" width="19" height="6.5" fill="none" stroke="#252423" stroke-width="1.1" stroke-dasharray="1.6 1.2"/>
 <rect x="42.5" y="1.5" width="14" height="4.5" rx="1" fill="none" stroke="#252423" stroke-width="1.1"/>
 <path d="M56.5 3.5h3.5v5.5h-9v4" fill="none" stroke="#252423" stroke-width="1.1"/>
 <rect x="49" y="13" width="4" height="7.5" fill="none" stroke="#252423" stroke-width="1.1"/>
 <circle cx="89.5" cy="9.5" r="8.3" fill="none" stroke="#252423" stroke-width="1.1"/>
 <path d="M81.5 10.5l4 2.5 4-1.5 7-4.5M84 13v4M87 13v5M90 12v6M93 10v6.5" fill="none" stroke="#252423" stroke-width="1.1"/>
 <path d="M95.5 15.5l5.5 5.5" stroke="#252423" stroke-width="1.1"/>
</svg>
<!-- scroll region -->
<div class="a" style="left:1005px;top:373px;width:180px;height:290px;overflow:hidden">
 <div class="a" style="left:4px;top:-20px;width:170px;height:41px;border:1px dashed #c8c6c4;background:#fff"></div>
 <div class="a" style="left:7px;top:-8px;width:164px;height:19px;background:#edebe9;border:1px solid #c8c6c4;border-radius:2px"></div>
 <div class="t" style="left:12px;top:-7px;font-size:12.5px;color:#252423">Card Type</div>
</div>
<svg class="a" style="left:1147px;top:372px" width="8" height="6" viewBox="0 0 8 6"><path d="M0.7 1l3.3 3.5 3.3-3.5" fill="none" stroke="#8a8886" stroke-width="1"/></svg><svg class="a" style="left:1162px;top:372px" width="10" height="7" viewBox="0 0 10 7"><path d="M0.7 5.5l4.3-4.3 4.3 4.3" fill="none" stroke="#605e5c" stroke-width="1"/></svg>
<div class="a" style="left:1017px;top:373px;width:40px;height:0;border-top:3px solid #f2c811;border-radius:2px;top:370px"></div>

<div class="t" style="left:1017px;top:407px;font-size:12.5px;color:#252423">Columns</div>
<div class="a" style="left:1009px;top:426px;width:170px;height:113px;border:1px dashed #c8c6c4;background:#fff"></div>
<div class="a" style="left:1012px;top:430px;width:164px;height:99px;background:#edebe9;border:1px solid #c8c6c4;border-radius:2px"></div>
<div class="t" style="left:1017px;top:437px;font-size:12.5px;color:#252423">Date</div>
<div class="t" style="left:1025px;top:456px;font-size:12.5px;color:#252423">Year</div>
<div class="t" style="left:1025px;top:475px;font-size:12.5px;color:#252423">Quarter</div>
<div class="t" style="left:1025px;top:494px;font-size:12.5px;color:#252423">Month</div>
<div class="t" style="left:1025px;top:513px;font-size:12.5px;color:#252423">Day</div>
<svg class="a" style="left:1145px;top:439px" width="12" height="7" viewBox="0 0 12 7"><path d="M0.7 0.7l5.3 5.5 5.3-5.5" fill="none" stroke="#3b3a39" stroke-width="1.1"/></svg><svg class="a" style="left:1162px;top:438px" width="9" height="9" viewBox="0 0 9 9"><path d="M0.7 0.7l7.6 7.6M8.3 0.7L0.7 8.3" stroke="#3b3a39" stroke-width="1.1"/></svg><svg class="a" style="left:1162px;top:457px" width="9" height="9" viewBox="0 0 9 9"><path d="M0.7 0.7l7.6 7.6M8.3 0.7L0.7 8.3" stroke="#3b3a39" stroke-width="1.1"/></svg><svg class="a" style="left:1162px;top:476px" width="9" height="9" viewBox="0 0 9 9"><path d="M0.7 0.7l7.6 7.6M8.3 0.7L0.7 8.3" stroke="#3b3a39" stroke-width="1.1"/></svg><svg class="a" style="left:1162px;top:495px" width="9" height="9" viewBox="0 0 9 9"><path d="M0.7 0.7l7.6 7.6M8.3 0.7L0.7 8.3" stroke="#3b3a39" stroke-width="1.1"/></svg><svg class="a" style="left:1162px;top:514px" width="9" height="9" viewBox="0 0 9 9"><path d="M0.7 0.7l7.6 7.6M8.3 0.7L0.7 8.3" stroke="#3b3a39" stroke-width="1.1"/></svg>

<div class="t" style="left:1017px;top:552px;font-size:12.5px;color:#252423">Values</div>
<div class="a" style="left:1009px;top:572px;width:170px;height:61px;border:1px dashed #c8c6c4;background:#fff"></div>
<div class="a" style="left:1012px;top:575px;width:164px;height:21px;background:#edebe9;border:1px solid #c8c6c4;border-radius:2px"></div>
<div class="t" style="left:1017px;top:581px;font-size:12.5px;color:#252423">First City</div>
<svg class="a" style="left:1145px;top:583px" width="12" height="7" viewBox="0 0 12 7"><path d="M0.7 0.7l5.3 5.5 5.3-5.5" fill="none" stroke="#3b3a39" stroke-width="1.1"/></svg><svg class="a" style="left:1162px;top:582px" width="9" height="9" viewBox="0 0 9 9"><path d="M0.7 0.7l7.6 7.6M8.3 0.7L0.7 8.3" stroke="#3b3a39" stroke-width="1.1"/></svg>
<div class="a" style="left:1012px;top:601px;width:164px;height:22px;background:#edebe9;border:1px solid #c8c6c4;border-radius:2px"></div>
<div class="t" style="left:1017px;top:606px;font-size:12.5px;color:#252423">Amount</div>
<svg class="a" style="left:1145px;top:608px" width="12" height="7" viewBox="0 0 12 7"><path d="M0.7 0.7l5.3 5.5 5.3-5.5" fill="none" stroke="#3b3a39" stroke-width="1.1"/></svg><svg class="a" style="left:1162px;top:607px" width="9" height="9" viewBox="0 0 9 9"><path d="M0.7 0.7l7.6 7.6M8.3 0.7L0.7 8.3" stroke="#3b3a39" stroke-width="1.1"/></svg>
<div class="a" style="left:1005px;top:645px;width:180px;height:18px;overflow:hidden">
 <div class="t" style="left:14px;top:5px;font-size:17px;color:#3b3a39;-webkit-text-stroke:0.35px #3b3a39">Drill through</div>
</div>
<!-- viz pane scrollbar -->
<div class="a" style="left:1179px;top:398px;width:4px;height:147px;background:#c8c6c4"></div>

<!-- ===== Fields pane ===== -->
<div class="t" style="left:1198px;top:138px;font-size:15.5px;color:#252423;-webkit-text-stroke:0.35px #252423">Fields</div>
<svg class="a" style="left:1345px;top:137px" width="9" height="13" viewBox="0 0 9 13"><path d="M1.5 1L7 6.5 1.5 12" fill="none" stroke="#3b3a39" stroke-width="1.1"/></svg>
<div class="a" style="left:1190px;top:169px;width:180px;height:27px;background:#fff;border:1px solid #605e5c;border-radius:2px"></div>
<svg class="a" style="left:1197px;top:174px" width="17" height="17" viewBox="0 0 17 17"><circle cx="10" cy="6" r="5" fill="none" stroke="#3b3a39" stroke-width="1.1"/><path d="M6.5 9.5L1 15" stroke="#3b3a39" stroke-width="1.2"/></svg>
<div class="t" style="left:1220px;top:176px;font-size:13px;color:#252423">Search</div>
<div class="a" style="left:1186px;top:202px;width:175px;height:1px;background:#e1dfdd"></div>

<svg class="a" style="left:1193px;top:220px" width="12" height="8" viewBox="0 0 12 8"><path d="M0.7 0.7l5.3 5.8 5.3-5.8" fill="none" stroke="#605e5c" stroke-width="1"/></svg>
<svg class="a" style="left:1207px;top:217px" width="22" height="20" viewBox="0 0 22 20">
 <rect x="1.5" y="1.5" width="12" height="11" fill="#fff" stroke="#3b3a39" stroke-width="1.1"/>
 <path d="M1.5 4.5h12M1.5 8h12M5.5 4.5v8M9.5 4.5v8" stroke="#3b3a39" stroke-width="1"/>
 <circle cx="14" cy="13" r="6" fill="#f2c811"/>
 <path d="M11.5 13l2 2 3-3.5" fill="none" stroke="#252423" stroke-width="1.3"/>
</svg>
<div class="t" style="left:1228px;top:218px;font-size:13px;color:#252423">demo</div>
<svg class="a" style="left:1224px;top:242px" width="12" height="12" viewBox="0 0 12 12"><rect x="0" y="0" width="12" height="12" rx="1.5" fill="#f2c811"/><path d="M3 6l2 2 4-4" fill="none" stroke="#7a6200" stroke-width="0.9"/></svg>
<div class="t" style="left:1258px;top:244px;font-size:11.5px;color:#323130">Amount</div>
<svg class="a" style="left:1224px;top:266px" width="12" height="12" viewBox="0 0 12 12"><rect x="0" y="0" width="12" height="12" rx="1.5" fill="#f2c811"/><path d="M3 6l2 2 4-4" fill="none" stroke="#7a6200" stroke-width="0.9"/></svg>
<div class="t" style="left:1258px;top:268px;font-size:11.5px;color:#323130">Card Type</div>
<svg class="a" style="left:1224px;top:290px" width="12" height="12" viewBox="0 0 12 12"><rect x="0" y="0" width="12" height="12" rx="1.5" fill="#f2c811"/><path d="M3 6l2 2 4-4" fill="none" stroke="#7a6200" stroke-width="0.9"/></svg>
<div class="t" style="left:1258px;top:292px;font-size:11.5px;color:#323130">City</div>
<svg class="a" style="left:1224px;top:314px" width="12" height="12" viewBox="0 0 12 12"><rect x="0" y="0" width="12" height="12" rx="1.5" fill="#f2c811"/><path d="M3 6l2 2 4-4" fill="none" stroke="#7a6200" stroke-width="0.9"/></svg>
<div class="t" style="left:1258px;top:316px;font-size:11.5px;color:#323130">Date</div>
<div class="a" style="left:1224px;top:338px;width:12px;height:12px;border:1px solid #8a8886;border-radius:1.5px;background:#f3f2f1"></div>
<div class="t" style="left:1258px;top:340px;font-size:11.5px;color:#323130">Exp Type</div>
<div class="a" style="left:1224px;top:362px;width:12px;height:12px;border:1px solid #8a8886;border-radius:1.5px;background:#f3f2f1"></div>
<div class="t" style="left:1258px;top:364px;font-size:11.5px;color:#323130">Gender</div>
<svg class="a" style="left:1240px;top:241px" width="12" height="14" viewBox="0 0 12 14"><path d="M11 1H1l5.5 6L1 13h10" fill="none" stroke="#252423" stroke-width="1.1"/></svg>
<svg class="a" style="left:1210px;top:314px" width="8" height="12" viewBox="0 0 8 12"><path d="M1 1l5.5 5L1 11" fill="none" stroke="#605e5c" stroke-width="1"/></svg>
<svg class="a" style="left:1237px;top:311px" width="22" height="22" viewBox="0 0 22 22">
 <rect x="1.5" y="2.5" width="15" height="13" fill="#fff" stroke="#3b3a39" stroke-width="1.1"/>
 <path d="M1.5 5.5h15M4.5 1v3M13.5 1v3" stroke="#3b3a39" stroke-width="1.1"/>
 <path d="M4 8h1M7 8h1M10 8h1M13 8h1M4 11h1M7 11h1M10 11h1M4 13.5h1M7 13.5h1" stroke="#8a8886" stroke-width="1"/>
 <circle cx="15" cy="15" r="6" fill="#f2c811"/>
 <path d="M12.5 15l2 2 3-3.5" fill="none" stroke="#252423" stroke-width="1.3"/>
</svg>

<!-- ===== Red annotations ===== -->
<svg class="a" style="left:990px;top:285px" width="300" height="330" viewBox="0 0 300 330">
 <path d="M220.5 12.5H195.7V262L179 281" fill="none" stroke="#ed1c24" stroke-width="5" stroke-linecap="round" stroke-linejoin="round"/>
 <path d="M181.5 264L177 283M198 272l-20 11" fill="none" stroke="#ed1c24" stroke-width="5" stroke-linecap="round"/>
 <rect x="10.7" y="284.3" width="179.6" height="27.8" fill="none" stroke="#ed1c24" stroke-width="5"/>
</svg>
<div class="t" style="left:1190px;top:577px;font-size:14px;font-weight:bold;color:#ed1c24;letter-spacing:0.1px">Value added</div>

<!-- status bar -->
<div class="a" style="left:0;top:663px;width:1361px;height:1px;background:#e1dfdd"></div>
<div class="t" style="left:5px;top:671px;font-size:11.5px;color:#323130">Page 1 of 1</div>
<!-- page tabs -->
<svg class="a" style="left:45px;top:643px" width="32" height="9" viewBox="0 0 32 9"><path d="M7 0.5v8L2 4.5z" fill="#c8c6c4"/><path d="M24 0.5v8l5-4z" fill="#c8c6c4"/></svg>
<div class="a" style="left:80px;top:628px;width:77px;height:35px;background:#fff;border-left:1px solid #8a8886;border-right:1px solid #c8c6c4"></div>
<div class="a" style="left:81px;top:659px;width:75px;height:4px;background:#f2c811"></div>
<div class="t" style="left:102px;top:641px;font-size:11.5px;color:#252423;-webkit-text-stroke:0.25px #252423">Page 1</div>
<div class="a" style="left:157px;top:630px;width:39px;height:32px;background:#f2c811"></div>
<div class="a" style="left:171px;top:645px;width:11px;height:3px;background:#6b6a69"></div>
<div class="a" style="left:175px;top:641px;width:3px;height:11px;background:#6b6a69"></div>

</body></html>
